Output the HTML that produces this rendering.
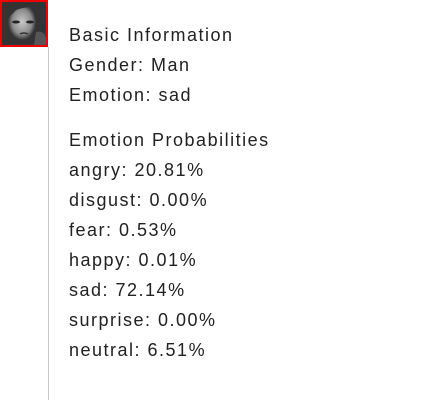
<!DOCTYPE html>
<html><head><style>
body{margin:0;width:448px;height:400px;background:#fff;position:relative;overflow:hidden;font-family:"Liberation Sans",sans-serif;}
.img{position:absolute;left:0;top:0;width:44px;height:43px;border:2px solid #e00;background:radial-gradient(ellipse 14px 18px at 20px 20px,#c8c8c8,#8a8a8a 70%,#333 100%);}
.line{position:absolute;left:48px;top:47px;width:1px;height:353px;background:#c8c8c8;}
.t{position:absolute;left:69px;font-size:18px;color:#222;letter-spacing:1.5px;line-height:20px;white-space:nowrap;}
</style></head><body>
<div class="img"><svg width="44" height="43" style="position:absolute;left:0;top:0"><path d="M0 0H44V10Q30 2 14 8L6 16V43H0Z" fill="#333"/><ellipse cx="14" cy="20" rx="4" ry="1.5" fill="#222"/><ellipse cx="28" cy="20" rx="4" ry="1.5" fill="#222"/><path d="M18 32Q22 30 26 32" stroke="#333" stroke-width="1.5" fill="none"/><path d="M34 30Q42 28 44 36V43H32Z" fill="#555"/></svg></div>
<div class="line"></div>
<div class="t" style="top:25px">Basic Information</div>
<div class="t" style="top:55px">Gender: Man</div>
<div class="t" style="top:85px">Emotion: sad</div>
<div class="t" style="top:130px">Emotion Probabilities</div>
<div class="t" style="top:160px">angry: 20.81%</div>
<div class="t" style="top:190px">disgust: 0.00%</div>
<div class="t" style="top:220px">fear: 0.53%</div>
<div class="t" style="top:250px">happy: 0.01%</div>
<div class="t" style="top:280px">sad: 72.14%</div>
<div class="t" style="top:310px">surprise: 0.00%</div>
<div class="t" style="top:340px">neutral: 6.51%</div>
</body></html>
